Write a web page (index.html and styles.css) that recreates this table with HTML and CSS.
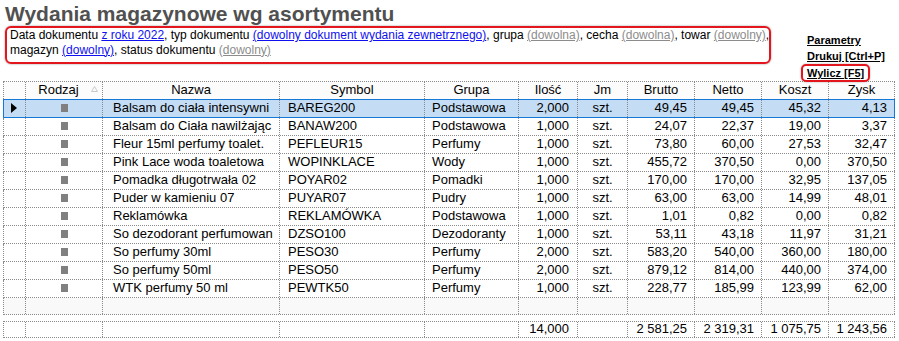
FILE: index.html
```html
<!DOCTYPE html>
<html lang="pl">
<head>
<meta charset="utf-8">
<title>Wydania magazynowe wg asortymentu</title>
<link rel="stylesheet" href="styles.css">
</head>
<body>
<h1 class="title">Wydania magazynowe wg asortymentu</h1>
<div class="top">
  <div class="filter">
    <div class="fline">Data dokumentu <a class="lk blue" href="#">z roku 2022</a>, typ dokumentu <a class="lk blue" href="#">(dowolny dokument wydania zewnetrznego)</a>, grupa <a class="lk grey" href="#">(dowolna)</a>, cecha <a class="lk grey" href="#">(dowolna)</a>, towar <a class="lk grey" href="#">(dowolny)</a>,</div>
    <div class="fline">magazyn <a class="lk blue" href="#">(dowolny)</a>, status dokumentu <a class="lk grey" href="#">(dowolny)</a></div>
  </div>
  <div class="links">
    <a class="act" href="#">Parametry</a>
    <a class="act" href="#">Drukuj [Ctrl+P]</a>
    <span class="act-wrap"><a class="act boxed" href="#">Wylicz [F5]</a></span>
  </div>
</div>

<div class="grid">
  <div class="row head">
    <div class="cell"></div>
    <div class="cell c hsort"><span class="hl">Rodzaj</span><svg class="sort" width="7" height="6" viewBox="0 0 7 6"><path d="M3.5 0.5 L6.5 5.5 L0.5 5.5 Z" fill="none" stroke="#c8c8c8" stroke-width="1"/></svg></div>
    <div class="cell c">Nazwa</div>
    <div class="cell c">Symbol</div>
    <div class="cell c">Grupa</div>
    <div class="cell c">Ilość</div>
    <div class="cell c">Jm</div>
    <div class="cell c">Brutto</div>
    <div class="cell c">Netto</div>
    <div class="cell c">Koszt</div>
    <div class="cell c">Zysk</div>
  </div>

  <div class="row sel">
    <div class="cell ind"><svg width="6" height="10" viewBox="0 0 6 10"><path d="M0 0 L6 5 L0 10 Z" fill="#000"/></svg></div>
    <div class="cell kind"><span class="sq"></span></div>
    <div class="cell name">Balsam do ciała intensywni</div>
    <div class="cell sym">BAREG200</div>
    <div class="cell grp">Podstawowa</div>
    <div class="cell qty">2,000</div>
    <div class="cell c">szt.</div>
    <div class="cell num">49,45</div>
    <div class="cell num">49,45</div>
    <div class="cell num">45,32</div>
    <div class="cell num">4,13</div>
  </div>

  <div class="row">
    <div class="cell ind"></div>
    <div class="cell kind"><span class="sq"></span></div>
    <div class="cell name">Balsam do Ciała nawilżając</div>
    <div class="cell sym">BANAW200</div>
    <div class="cell grp">Podstawowa</div>
    <div class="cell qty">1,000</div>
    <div class="cell c">szt.</div>
    <div class="cell num">24,07</div>
    <div class="cell num">22,37</div>
    <div class="cell num">19,00</div>
    <div class="cell num">3,37</div>
  </div>

  <div class="row">
    <div class="cell ind"></div>
    <div class="cell kind"><span class="sq"></span></div>
    <div class="cell name">Fleur 15ml perfumy toalet.</div>
    <div class="cell sym">PEFLEUR15</div>
    <div class="cell grp">Perfumy</div>
    <div class="cell qty">1,000</div>
    <div class="cell c">szt.</div>
    <div class="cell num">73,80</div>
    <div class="cell num">60,00</div>
    <div class="cell num">27,53</div>
    <div class="cell num">32,47</div>
  </div>

  <div class="row">
    <div class="cell ind"></div>
    <div class="cell kind"><span class="sq"></span></div>
    <div class="cell name">Pink Lace woda toaletowa</div>
    <div class="cell sym">WOPINKLACE</div>
    <div class="cell grp">Wody</div>
    <div class="cell qty">1,000</div>
    <div class="cell c">szt.</div>
    <div class="cell num">455,72</div>
    <div class="cell num">370,50</div>
    <div class="cell num">0,00</div>
    <div class="cell num">370,50</div>
  </div>

  <div class="row">
    <div class="cell ind"></div>
    <div class="cell kind"><span class="sq"></span></div>
    <div class="cell name">Pomadka długotrwała 02</div>
    <div class="cell sym">POYAR02</div>
    <div class="cell grp">Pomadki</div>
    <div class="cell qty">1,000</div>
    <div class="cell c">szt.</div>
    <div class="cell num">170,00</div>
    <div class="cell num">170,00</div>
    <div class="cell num">32,95</div>
    <div class="cell num">137,05</div>
  </div>

  <div class="row">
    <div class="cell ind"></div>
    <div class="cell kind"><span class="sq"></span></div>
    <div class="cell name">Puder w kamieniu 07</div>
    <div class="cell sym">PUYAR07</div>
    <div class="cell grp">Pudry</div>
    <div class="cell qty">1,000</div>
    <div class="cell c">szt.</div>
    <div class="cell num">63,00</div>
    <div class="cell num">63,00</div>
    <div class="cell num">14,99</div>
    <div class="cell num">48,01</div>
  </div>

  <div class="row">
    <div class="cell ind"></div>
    <div class="cell kind"><span class="sq"></span></div>
    <div class="cell name">Reklamówka</div>
    <div class="cell sym">REKLAMÓWKA</div>
    <div class="cell grp">Podstawowa</div>
    <div class="cell qty">1,000</div>
    <div class="cell c">szt.</div>
    <div class="cell num">1,01</div>
    <div class="cell num">0,82</div>
    <div class="cell num">0,00</div>
    <div class="cell num">0,82</div>
  </div>

  <div class="row">
    <div class="cell ind"></div>
    <div class="cell kind"><span class="sq"></span></div>
    <div class="cell name">So dezodorant perfumowan</div>
    <div class="cell sym">DZSO100</div>
    <div class="cell grp">Dezodoranty</div>
    <div class="cell qty">1,000</div>
    <div class="cell c">szt.</div>
    <div class="cell num">53,11</div>
    <div class="cell num">43,18</div>
    <div class="cell num">11,97</div>
    <div class="cell num">31,21</div>
  </div>

  <div class="row">
    <div class="cell ind"></div>
    <div class="cell kind"><span class="sq"></span></div>
    <div class="cell name">So perfumy 30ml</div>
    <div class="cell sym">PESO30</div>
    <div class="cell grp">Perfumy</div>
    <div class="cell qty">2,000</div>
    <div class="cell c">szt.</div>
    <div class="cell num">583,20</div>
    <div class="cell num">540,00</div>
    <div class="cell num">360,00</div>
    <div class="cell num">180,00</div>
  </div>

  <div class="row">
    <div class="cell ind"></div>
    <div class="cell kind"><span class="sq"></span></div>
    <div class="cell name">So perfumy 50ml</div>
    <div class="cell sym">PESO50</div>
    <div class="cell grp">Perfumy</div>
    <div class="cell qty">2,000</div>
    <div class="cell c">szt.</div>
    <div class="cell num">879,12</div>
    <div class="cell num">814,00</div>
    <div class="cell num">440,00</div>
    <div class="cell num">374,00</div>
  </div>

  <div class="row">
    <div class="cell ind"></div>
    <div class="cell kind"><span class="sq"></span></div>
    <div class="cell name">WTK perfumy 50 ml</div>
    <div class="cell sym">PEWTK50</div>
    <div class="cell grp">Perfumy</div>
    <div class="cell qty">1,000</div>
    <div class="cell c">szt.</div>
    <div class="cell num">228,77</div>
    <div class="cell num">185,99</div>
    <div class="cell num">123,99</div>
    <div class="cell num">62,00</div>
  </div>

  <div class="row empty">
    <div class="cell"></div><div class="cell"></div><div class="cell"></div><div class="cell"></div><div class="cell"></div><div class="cell"></div><div class="cell"></div><div class="cell"></div><div class="cell"></div><div class="cell"></div><div class="cell"></div>
  </div>

  <div class="row total">
    <div class="cell"></div>
    <div class="cell"></div>
    <div class="cell"></div>
    <div class="cell"></div>
    <div class="cell"></div>
    <div class="cell qty">14,000</div>
    <div class="cell"></div>
    <div class="cell num">2 581,25</div>
    <div class="cell num">2 319,31</div>
    <div class="cell num">1 075,75</div>
    <div class="cell num">1 243,56</div>
  </div>
</div>
</body>
</html>
```

FILE: styles.css
```css
html, body {
  margin: 0;
  padding: 0;
  background: #ffffff;
}

body {
  font-family: "Liberation Sans", Arial, sans-serif;
  color: #000;
}

.title {
  margin: 0;
  height: 26px;
  box-sizing: border-box;
  padding: 2px 0 0 5px;
  font-size: 21px;
  line-height: 24px;
  font-weight: bold;
  color: #505050;
  white-space: nowrap;
}

.top {
  display: flex;
  height: 55px;
}

.filter {
  margin-left: 5px;
  width: 766px;
  height: 38px;
  box-sizing: border-box;
  border: 2px solid #e3161e;
  border-radius: 6px;
  box-shadow: 0 0 2px rgba(0, 0, 0, 0.45);
  padding: 0 0 0 3px;
  font-size: 12px;
  line-height: 14.5px;
}

.fline {
  white-space: nowrap;
}

.lk {
  text-decoration: underline;
}

.lk.blue {
  color: #1010f0;
}

.lk.grey {
  color: #8c8c8c;
}

.links {
  margin-left: 36px;
  padding-top: 6px;
  display: flex;
  flex-direction: column;
  align-items: flex-start;
  font-size: 11px;
  line-height: 16px;
  font-weight: bold;
}

.act {
  color: #000;
  text-decoration: underline;
  white-space: nowrap;
}

.act.boxed {
  display: inline-block;
  line-height: 12px;
  padding: 1px 4px;
  margin-left: -6px;
  border: 2px solid #e3161e;
  border-radius: 5px;
  box-shadow: 0 0 2px rgba(0, 0, 0, 0.35);
}

/* grid */
.grid {
  margin-left: 3px;
  width: 892px;
  font-size: 13px;
}

.row {
  display: grid;
  grid-template-columns: 22px 77px 177px 145px 94px 59px 50px 67px 67px 67px 66px;
  border-left: 1px dotted #8a8a8a;
  border-bottom: 1px dotted #8a8a8a;
}

.cell {
  border-right: 1px dotted #8a8a8a;
  height: 17px;
  line-height: 15px;
  white-space: nowrap;
  overflow: hidden;
  box-sizing: content-box;
}

.row.head {
  border-top: 1px dotted #8a8a8a;
  border-bottom: none;
  background: #fcfcfc;
}

.c {
  text-align: center;
}

.hsort {
  display: flex;
  align-items: center;
  padding-right: 4px;
}

.hsort .hl {
  flex: 1;
  text-align: center;
  line-height: 15px;
  align-self: flex-start;
}

.sort {
  display: block;
  margin-top: -3px;
}

.name {
  padding-left: 10px;
}

.sym {
  padding-left: 8px;
}

.grp {
  padding-left: 7px;
}

.qty {
  text-align: right;
  padding-right: 8px;
}

.num {
  text-align: right;
  padding-right: 7px;
}

.ind {
  display: flex;
  align-items: center;
  padding-left: 7px;
}

.ind svg {
  display: block;
  margin-top: -1px;
}

.kind {
  display: flex;
  align-items: center;
  justify-content: center;
}

.sq {
  display: block;
  width: 7px;
  height: 8px;
  margin-top: -1px;
  background: #808080;
}

.row.sel {
  background: #c4ddf4;
  border-top: 1px solid #1479d6;
  border-bottom: 1px solid #1479d6;
  border-left: 1px solid #1479d6;
}

.row.sel .cell:last-child {
  border-right: 1px solid #1479d6;
}

.row.empty {
  background: #f9f9f9;
}

.row.empty .cell {
  height: 16px;
}

.row.total {
  margin-top: 6px;
  border-top: 1px dotted #8a8a8a;
}

.row.total .cell {
  height: 15px;
  line-height: 14px;
}
```
